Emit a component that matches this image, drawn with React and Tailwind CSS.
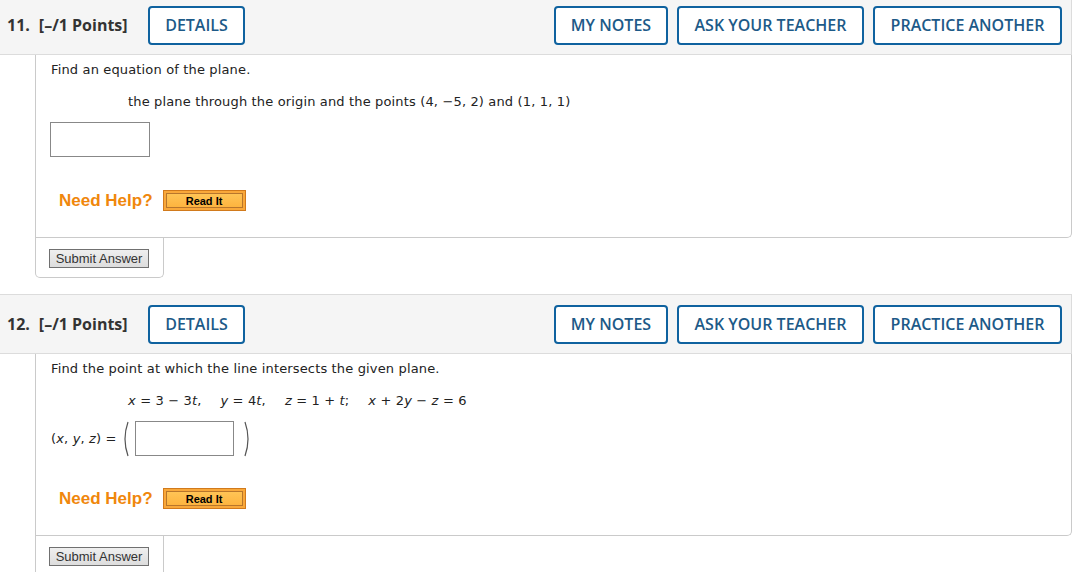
import React from "react";

const headFont = { fontFamily: '"Open Sans", "Liberation Sans", sans-serif' };
const bodyFont = { fontFamily: '"DejaVu Sans", Verdana, sans-serif' };
const arial = { fontFamily: '"Liberation Sans", Arial, sans-serif' };

function HeadButton({ w, children }) {
  return (
    <button
      className={
        "h-[39px] shrink-0 rounded-[4px] border-2 border-[#0f629f] bg-white text-[16px] font-semibold text-[#1d5a88] " +
        w
      }
      style={headFont}
    >
      {children}
    </button>
  );
}

function Header({ num }) {
  return (
    <div className="flex h-[60px] items-center border-y border-r border-[#dcdcdc] bg-[#f5f5f5] pl-[7px] pr-[9px]">
      <div
        className="w-[141px] shrink-0 text-[16px] font-bold text-[#333]"
        style={headFont}
      >
        <span className="mr-[9px]">{num}.</span>[–/1 Points]
      </div>
      <HeadButton w="w-[97px]">DETAILS</HeadButton>
      <div className="flex-1" />
      <div className="flex gap-[9px]">
        <HeadButton w="w-[114px]">MY NOTES</HeadButton>
        <HeadButton w="w-[187px]">ASK YOUR TEACHER</HeadButton>
        <HeadButton w="w-[189px]">PRACTICE ANOTHER</HeadButton>
      </div>
    </div>
  );
}

function HelpRow({ mt }) {
  return (
    <div className={"ml-[8px] flex h-[21px] items-center tracking-normal " + mt}>
      <span className="text-[17px] font-bold text-[#f0870c]" style={arial}>
        Need Help?
      </span>
      <button
        className="ml-[10px] flex h-[21px] w-[83px] items-center justify-center border border-[#d17a1c] bg-[#f9a83a] p-[2px]"
        style={arial}
      >
        <span className="flex h-full w-full items-center justify-center border border-[#b8762c] bg-gradient-to-b from-[#ffc455] to-[#fdb43f] text-[11px] font-bold text-black">
          Read It
        </span>
      </button>
    </div>
  );
}

function Submit() {
  return (
    <div className="ml-[35px] w-[129px] rounded-b-[5px] border-x border-b border-[#cacaca] pb-[9px] pl-[13px] pt-[11px]">
      <button
        className="flex h-[19px] w-[100px] items-center justify-center border border-[#707070] bg-gradient-to-b from-[#efefef] to-[#dddddd] text-[13px] text-[#333]"
        style={arial}
      >
        Submit Answer
      </button>
    </div>
  );
}

function Paren({ right }) {
  return (
    <svg width="10" height="36" viewBox="0 0 10 36" className="shrink-0">
      <path
        d={right ? "M3 1 Q9 18 3 35" : "M7 1 Q1 18 7 35"}
        fill="none"
        stroke="#555"
        strokeWidth="1.2"
      />
    </svg>
  );
}

export default function App() {
  return (
    <div className="h-[572px] w-[1072px] overflow-hidden bg-white">
      {/* question 11 */}
      <section className="-mt-[5px]">
        <Header num="11" />
        <div
          className="ml-[35px] rounded-br-[5px] border-x border-b border-[#cacaca] pb-[26px] pl-[15px] pt-[7px] text-[13px] leading-[16px] tracking-[0.15px] text-[#222]"
          style={bodyFont}
        >
          <p>Find an equation of the plane.</p>
          <p className="ml-[77px] mt-[16px]">
            the plane through the origin and the points (4, −5, 2) and (1, 1, 1)
          </p>
          <div className="-ml-px mt-[12px] h-[35px] w-[100px] border border-[#888]" />
          <HelpRow mt="mt-[33px]" />
        </div>
        <Submit />
      </section>

      {/* question 12 */}
      <section className="mt-[16px]">
        <Header num="12" />
        <div
          className="ml-[35px] rounded-br-[5px] border-x border-b border-[#cacaca] pb-[26px] pl-[15px] pt-[7px] text-[13px] leading-[16px] tracking-[0.15px] text-[#222]"
          style={bodyFont}
        >
          <p>Find the point at which the line intersects the given plane.</p>
          <div className="ml-[77px] mt-[16px] flex gap-[19px]">
            <span>
              <i>x</i> = 3 − 3<i>t</i>,
            </span>
            <span>
              <i>y</i> = 4<i>t</i>,
            </span>
            <span>
              <i>z</i> = 1 + <i>t</i>;
            </span>
            <span>
              <i>x</i> + 2<i>y</i> − <i>z</i> = 6
            </span>
          </div>
          <div className="mt-[12px] flex h-[35px] items-center">
            <span>
              (<i>x</i>, <i>y</i>, <i>z</i>) =
            </span>
            <div className="ml-[4px]">
              <Paren />
            </div>
            <div className="ml-[4px] h-[35px] w-[99px] border border-[#888]" />
            <div className="ml-[8px]">
              <Paren right />
            </div>
          </div>
          <HelpRow mt="mt-[32px]" />
        </div>
        <Submit />
      </section>
    </div>
  );
}
